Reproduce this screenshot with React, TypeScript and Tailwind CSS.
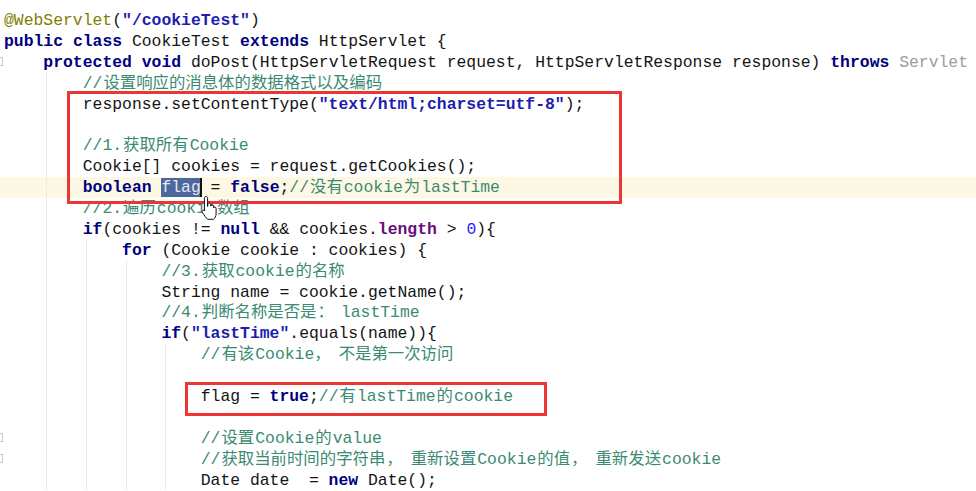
import React, { FC, ReactNode } from 'react';

type Tok = [string, string];

const kw = 'text-[#000080] font-bold';
const str = 'text-[#1d1db0] font-bold';
const cm = 'text-[#3b8a73]';
const ann = 'text-[#808000]';
const fld = 'text-[#660e7a] font-bold';
const num = 'text-[#1c1cff]';
const pl = 'text-[#141414]';
const dim = 'text-[#9c9c9c]';

const pad = (n: number): Tok => [' '.repeat(n), pl];

const lines: Tok[][] = [
  [['@WebServlet', ann], ['(', pl], ['"/cookieTest"', str], [')', pl]],
  [['public', kw], [' ', pl], ['class', kw], [' CookieTest ', pl], ['extends', kw], [' HttpServlet {', pl]],
  [
    pad(4),
    ['protected', kw],
    [' ', pl],
    ['void', kw],
    [' doPost(HttpServletRequest request, HttpServletResponse response) ', pl],
    ['throws', kw],
    [' Servlet', dim],
  ],
  [pad(8), ['//设置响应的消息体的数据格式以及编码', cm]],
  [pad(8), ['response.setContentType(', pl], ['"text/html;charset=utf-8"', str], [');', pl]],
  [],
  [pad(8), ['//1.获取所有Cookie', cm]],
  [pad(8), ['Cookie[] cookies = request.getCookies();', pl]],
  [pad(8), ['boolean', kw], [' ', pl], ['flag', 'sel'], [' = ', pl], ['false', kw], [';', pl], ['//没有cookie为lastTime', cm]],
  [pad(8), ['//2.遍历cookie数组', cm]],
  [pad(8), ['if', kw], ['(cookies != ', pl], ['null', kw], [' && cookies.', pl], ['length', fld], [' > ', pl], ['0', num], ['){', pl]],
  [pad(12), ['for', kw], [' (Cookie cookie : cookies) {', pl]],
  [pad(16), ['//3.获取cookie的名称', cm]],
  [pad(16), ['String name = cookie.getName();', pl]],
  [pad(16), ['//4.判断名称是否是：lastTime', cm]],
  [pad(16), ['if', kw], ['(', pl], ['"lastTime"', str], ['.equals(name)){', pl]],
  [pad(20), ['//有该Cookie，不是第一次访问', cm]],
  [],
  [pad(20), ['flag = ', pl], ['true', kw], [';', pl], ['//有lastTime的cookie', cm]],
  [],
  [pad(20), ['//设置Cookie的value', cm]],
  [pad(20), ['//获取当前时间的字符串，重新设置Cookie的值，重新发送cookie', cm]],
  [pad(20), ['Date date  = ', pl], ['new', kw], [' Date();', pl]],
];

// indent guides drawn as row backgrounds, by nesting depth
const guides = [
  '',
  'bg-[linear-gradient(to_right,transparent_46px,#ebebeb_46px,#ebebeb_47px,transparent_47px)]',
  'bg-[linear-gradient(to_right,transparent_46px,#ebebeb_46px,#ebebeb_47px,transparent_47px,transparent_86px,#ebebeb_86px,#ebebeb_87px,transparent_87px)]',
  'bg-[linear-gradient(to_right,transparent_46px,#ebebeb_46px,#ebebeb_47px,transparent_47px,transparent_86px,#ebebeb_86px,#ebebeb_87px,transparent_87px,transparent_126px,#ebebeb_126px,#ebebeb_127px,transparent_127px)]',
  'bg-[linear-gradient(to_right,transparent_46px,#ebebeb_46px,#ebebeb_47px,transparent_47px,transparent_86px,#ebebeb_86px,#ebebeb_87px,transparent_87px,transparent_126px,#ebebeb_126px,#ebebeb_127px,transparent_127px,transparent_165px,#ebebeb_165px,#ebebeb_166px,transparent_166px)]',
];

const depthOf = (i: number) => (i < 3 ? 0 : i < 11 ? 1 : i < 12 ? 2 : i < 16 ? 3 : 4);

const foldRows = new Set([2, 20, 21]);

const Comment: FC<{ text: string }> = ({ text }) => (
  <span className={cm}>
    {text.split(/([\u4e00-\u9fff]+|[，：])/).map((part, i) =>
      part === '，' || part === '：' ? (
        <span key={i} className="mr-[7px]">
          {part}
        </span>
      ) : /[\u4e00-\u9fff]/.test(part) ? (
        <span key={i} className="mx-[1px]">
          {part}
        </span>
      ) : (
        part
      ),
    )}
  </span>
);

const HandCursor: FC = () => (
  <svg width="18" height="26" viewBox="0 0 18 26" className="absolute left-[201px] top-[195px]">
    <path
      d="M5 1.5c1 0 1.6.7 1.6 1.7v8.3l.2-2.2c.2-.9.9-1.3 1.6-1.2.8.1 1.3.7 1.3 1.6v1.4c.2-.8.8-1.2 1.5-1.1.8.1 1.3.7 1.3 1.5v1.3c.3-.6.8-.9 1.4-.8.8.1 1.2.8 1.2 1.6v5.3c0 2.4-1.2 4.2-2.6 5.4H6.6C5.2 23 2.6 19.6 1.5 17.5c-.5-.9-.3-1.7.4-2.1.7-.4 1.5-.1 2 .6l-.5-.8V3.2C3.4 2.2 4 1.5 5 1.5z"
      fill="#ffffff"
      stroke="#111111"
      strokeWidth="1"
    />
  </svg>
);

const CodeLine: FC<{ toks: Tok[]; idx: number }> = ({ toks, idx }) => {
  const children: ReactNode[] = toks.map(([text, cls], i) => {
    if (cls === 'sel')
      return (
        <span key={i} className="relative bg-[#4d689c] text-[#e3e9f3]">
          {text}
          <span className="absolute right-[-1px] top-0 h-full w-[2px] bg-[#111]" />
        </span>
      );
    if (cls === cm) return <Comment key={i} text={text} />;
    return (
      <span key={i} className={cls}>
        {text}
      </span>
    );
  });
  return (
    <div
      className={clsxRow(
        'relative h-[20.9px] pl-[4px] pt-[2.5px]',
        guides[depthOf(idx)],
        idx === 8 ? 'bg-[#fdf8e4]' : '',
      )}
    >
      {foldRows.has(idx) && (
        <span className="absolute left-[-5px] top-[6px] h-[9px] w-[8px] border border-[#c8c8c8] bg-white" />
      )}
      {children.length ? children : '\u00a0'}
    </div>
  );
};

const clsxRow = (...parts: string[]) => parts.filter(Boolean).join(' ');

const App: FC = () => (
  <div className="relative h-[491px] w-[976px] overflow-hidden bg-white">
    <div
      className="flex flex-col whitespace-pre pt-[9.5px] text-[16.4px] leading-[18.4px]"
      style={{ fontFamily: '"Liberation Mono", "Noto Sans CJK SC", monospace' }}
    >
      {lines.map((toks, i) => (
        <CodeLine key={i} toks={toks} idx={i} />
      ))}
    </div>
    <div className="absolute left-[67px] top-[91px] h-[113px] w-[555px] border-[3px] border-[#ec3535]" />
    <div className="absolute left-[185px] top-[382px] h-[34px] w-[362px] border-[3px] border-[#ec3535]" />
    <HandCursor />
  </div>
);

export default App;
